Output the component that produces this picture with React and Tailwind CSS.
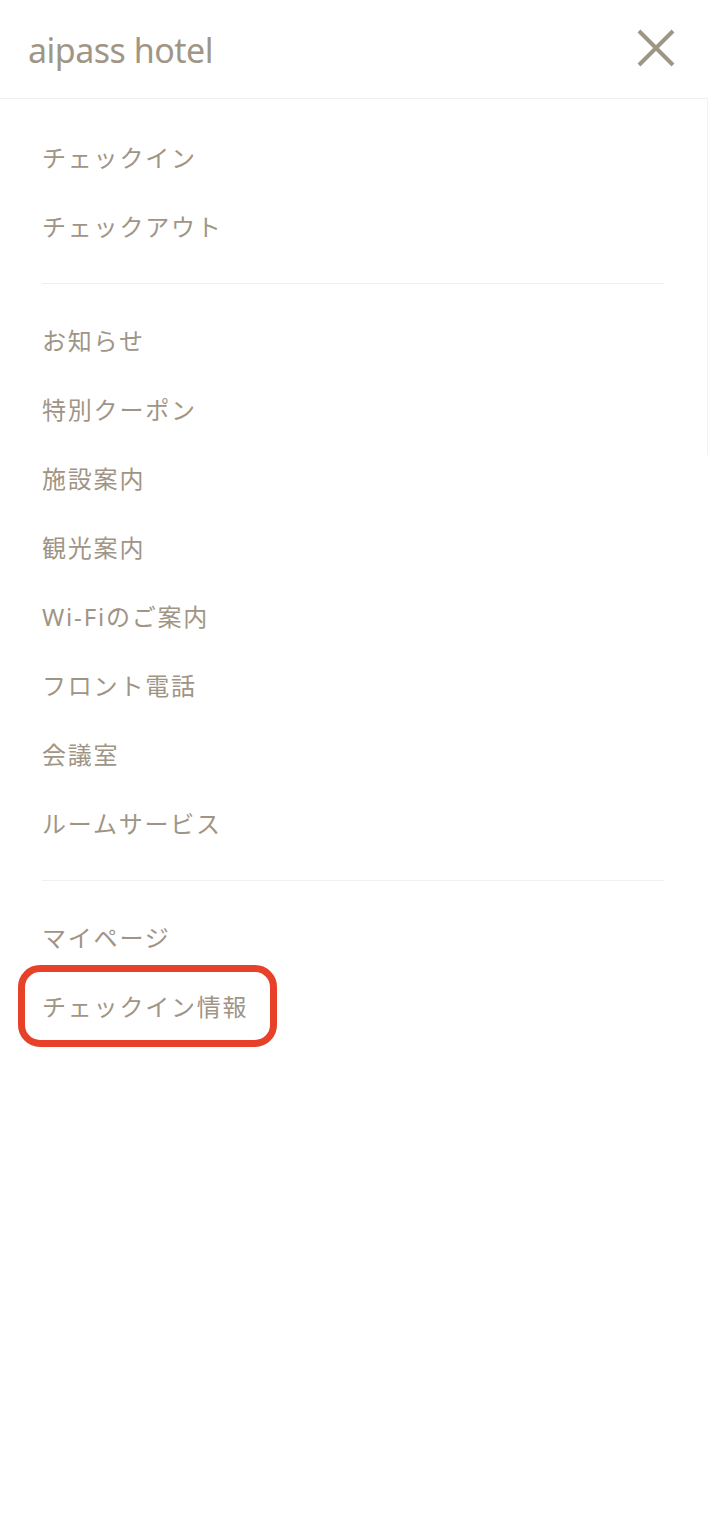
import React from "react";

const font = { fontFamily: '"Noto Sans", "Noto Sans CJK JP", sans-serif' };

function Item({ label, highlight }) {
  return (
    <li className="relative flex h-[69px] items-center">
      <span className="text-[24px] leading-none tracking-[1.8px] text-[#9f9586]">{label}</span>
      {highlight && (
        <div className="pointer-events-none absolute left-[-24px] top-[-7px] h-[82px] w-[259px] rounded-[22px] border-[7px] border-[#e8412a]" />
      )}
    </li>
  );
}

export default function App() {
  const g1 = ["チェックイン", "チェックアウト"];
  const g2 = ["お知らせ", "特別クーポン", "施設案内", "観光案内", "Wi-Fiのご案内", "フロント電話", "会議室", "ルームサービス"];
  return (
    <div className="relative min-h-[1534px] w-full bg-white" style={font}>
      <header className="flex h-[99px] items-center justify-between border-b border-[#efefef] pl-[28px] pr-[32px]">
        <span className="pt-[2px] text-[34px] leading-none tracking-[-0.015em] text-[#a09686]">aipass hotel</span>
        <svg width="40" height="40" viewBox="0 0 40 40" className="mb-[2px]">
          <path d="M3 3 L37 37 M37 3 L3 37" stroke="#9e9585" strokeWidth="4" strokeLinecap="butt" />
        </svg>
      </header>
      <div className="absolute right-0 top-[99px] h-[356px] w-px bg-[#f2f2f2]" />
      <nav className="px-[42px] pt-[24px]">
        <ul>
          {g1.map((l) => (
            <Item key={l} label={l} />
          ))}
        </ul>
        <div className="my-[22px] h-px w-[622px] bg-[#efefef]" />
        <ul>
          {g2.map((l) => (
            <Item key={l} label={l} />
          ))}
        </ul>
        <div className="my-[22px] h-px w-[622px] bg-[#efefef]" />
        <ul>
          <Item label="マイページ" />
          <Item label="チェックイン情報" highlight />
        </ul>
      </nav>
    </div>
  );
}
